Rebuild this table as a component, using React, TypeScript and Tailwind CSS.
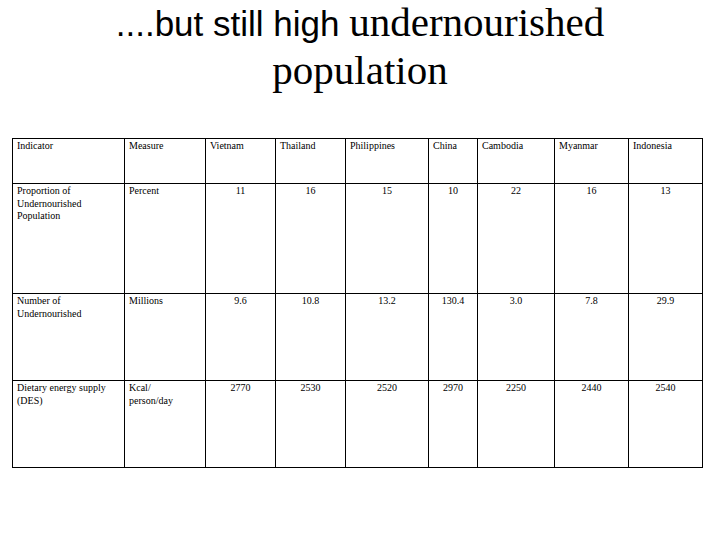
const columns = [
  { label: 'Indicator', width: 'w-[112px]' },
  { label: 'Measure', width: 'w-[81px]' },
  { label: 'Vietnam', width: 'w-[70px]' },
  { label: 'Thailand', width: 'w-[70px]' },
  { label: 'Philippines', width: 'w-[83px]' },
  { label: 'China', width: 'w-[49px]' },
  { label: 'Cambodia', width: 'w-[77px]' },
  { label: 'Myanmar', width: 'w-[74px]' },
  { label: 'Indonesia', width: 'w-[74px]' },
]

const rows = [
  {
    indicator: ['Proportion of', 'Undernourished', 'Population'],
    measure: ['Percent'],
    values: ['11', '16', '15', '10', '22', '16', '13'],
    height: 'h-[110px]',
  },
  {
    indicator: ['Number of', 'Undernourished'],
    measure: ['Millions'],
    values: ['9.6', '10.8', '13.2', '130.4', '3.0', '7.8', '29.9'],
    height: 'h-[87px]',
  },
  {
    indicator: ['Dietary energy supply', '(DES)'],
    measure: ['Kcal/', 'person/day'],
    values: ['2770', '2530', '2520', '2970', '2250', '2440', '2540'],
    height: 'h-[87px]',
  },
]

export default function App() {
  return (
    <div className="w-[720px] h-[540px] bg-white text-black overflow-hidden">
      {/* Title */}
      <div className="text-center">
        <div className="h-[44px] leading-[44px]">
          <span className="font-['Liberation_Sans',sans-serif] text-[35px]">....but still high </span>
          <span className="font-['Liberation_Serif',serif] text-[41px]">undernourished</span>
        </div>
        <div className="h-[52px] leading-[52px] font-['Liberation_Serif',serif] text-[41px]">population</div>
      </div>

      {/* Table */}
      <table className="ml-[12px] mt-[42px] table-fixed border-collapse font-['Liberation_Serif',serif] text-[10px] leading-[12.5px]">
        <thead>
          <tr className="h-[45px]">
            {columns.map(col => (
              <th
                key={col.label}
                className={`${col.width} border border-black align-top text-left font-normal pl-[4px] pt-[1px]`}
              >
                {col.label}
              </th>
            ))}
          </tr>
        </thead>
        <tbody>
          {rows.map(row => (
            <tr key={row.indicator[0]} className={row.height}>
              <td className="border border-black align-top pl-[4px] pt-[1px]">
                {row.indicator.map(line => <div key={line}>{line}</div>)}
              </td>
              <td className="border border-black align-top pl-[4px] pt-[1px]">
                {row.measure.map(line => <div key={line}>{line}</div>)}
              </td>
              {row.values.map((v, i) => (
                <td key={i} className="border border-black align-top text-center pt-[1px]">
                  {v}
                </td>
              ))}
            </tr>
          ))}
        </tbody>
      </table>
    </div>
  )
}
